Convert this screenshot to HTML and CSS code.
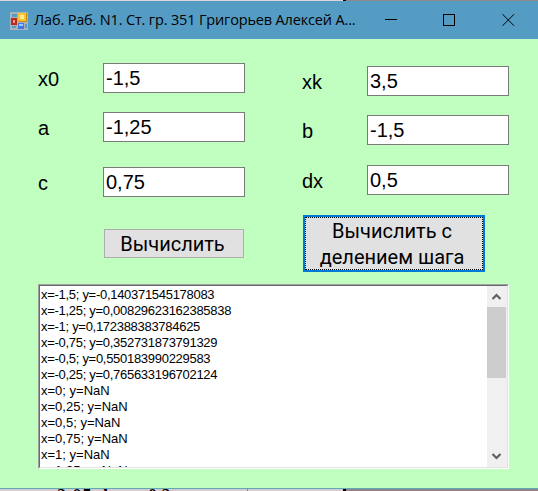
FILE: index.html
```
<!DOCTYPE html>
<html lang="ru">
<head>
<meta charset="utf-8">
<title>Лаб. Раб. N1</title>
<link rel="stylesheet" href="styles.css">
</head>
<body>
<div class="backdrop-top"></div>
<main class="window">
  <header class="titlebar">
    <svg class="app-icon" width="18" height="18" viewBox="0 0 18 18">
      <path fill="#a9b3bd" d="M0 0h18v18H0z"/>
      <path fill="#559cbe" d="M2 2h5v3H2zM2 14h4v2H2zM15 12h2v4h-2z"/>
      <path fill="#b92b20" d="M1 6h6v7H1z"/><path fill="#ee9580" d="M3 8h2v3H3z"/>
      <path fill="#c88b13" d="M8 1h9v9H8z"/><path fill="#f7c52f" d="M8 1h8v8H8z"/><path fill="#ffed91" d="M10 3h4v4h-4z"/>
      <path fill="#4478df" d="M8 11h6v6H8z"/><path fill="#a3c4fa" d="M9 12h4v2H9z"/>
    </svg>
    <h1 class="caption">Лаб. Раб. N1. Ст. гр. 351 Григорьев Алексей А...</h1>
    <svg class="controls" width="130" height="12" viewBox="0 0 130 12" fill="none" stroke="#000">
      <path d="M0 5.5h12M58.5.5h11v11h-11z" shape-rendering="crispEdges"/><path d="M117.5.2l11.6 11.6m0-11.6l-11.6 11.6"/>
    </svg>
  </header>
  <section class="form">
    <div class="column left">
      <label class="field"><span>x0</span><span class="box">-1,5</span></label>
      <label class="field"><span>a</span><span class="box">-1,25</span></label>
      <label class="field last"><span>c</span><span class="box">0,75</span></label>
      <button class="btn plain">Вычислить</button>
    </div>
    <div class="column right">
      <label class="field"><span>xk</span><span class="box">3,5</span></label>
      <label class="field"><span>b</span><span class="box">-1,5</span></label>
      <label class="field last"><span>dx</span><span class="box">0,5</span></label>
      <button class="btn focused"><span>Вычислить с<br>делением шага</span></button>
    </div>
  </section>
  <section class="list">
    <div class="rows">
      <div class="value">x=-1,5; y=-0,140371545178083</div>
      <div class="value">x=-1,25; y=0,00829623162385838</div>
      <div class="value">x=-1; y=0,172388383784625</div>
      <div class="value">x=-0,75; y=0,352731873791329</div>
      <div class="value">x=-0,5; y=0,550183990229583</div>
      <div class="value">x=-0,25; y=0,765633196702124</div>
      <div>x=0; y=NaN</div>
      <div>x=0,25; y=NaN</div>
      <div>x=0,5; y=NaN</div>
      <div>x=0,75; y=NaN</div>
      <div>x=1; y=NaN</div>
      <div>x=1,25; y=NaN</div>
    </div>
    <div class="scrollbar">
      <svg class="arrow" width="20" height="21" viewBox="0 0 20 21"><path d="M5.5 13l4-4 4 4"/></svg>
      <div class="thumb"></div>
      <svg class="arrow down" width="20" height="21" viewBox="0 0 20 21"><path d="M5.5 8l4 4 4-4"/></svg>
    </div>
  </section>
</main>
<footer class="backdrop-bottom"><span class="left-text">2.05 dx</span><span>0.2</span></footer>
</body>
</html>
```

FILE: styles.css
```
* { box-sizing: border-box; }
body {
  margin: 0;
  width: 538px;
  height: 491px;
  overflow: hidden;
  font-family: "Liberation Sans", Arial, sans-serif;
  color: #000;
}
.backdrop-top {
  height: 1px;
  background: linear-gradient(90deg, #d9d7d7 343px, #000 343px 346px, #8c8888 346px);
}
.window {
  height: 488px;
  background: #c0ffc0;
  border-bottom: 1px solid #66a6b5;
}
.titlebar {
  display: flex;
  height: 38px;
  padding: 0 23px 0 10px;
  align-items: center;
  background: #559cc4;
}
.caption {
  margin: 0 0 0 6px;
  font: 400 14.5px/20px "Open Sans", "Noto Sans", sans-serif;
  letter-spacing: -0.16px;
  white-space: nowrap;
}
.app-icon { margin-top: 2px; }
.controls { margin-left: auto; flex: none; width: 130px; }
.form {
  display: flex;
  height: 245px;
  padding-left: 38px;
}
.column { display: flex; flex-direction: column; }
.left { width: 264px; padding-top: 24px; }
.right { width: 207px; padding-top: 27px; }
.field {
  display: flex;
  width: 207px;
  height: 30px;
  margin-bottom: 19px;
  justify-content: space-between;
  font-size: 20px;
  line-height: 32px;
}
.left .last { margin-top: 6px; }
.right .last { margin-top: 1px; }
.box {
  width: 142px;
  height: 30px;
  padding-left: 2px;
  border: 1px solid #7a7a7a;
  background: #fff;
  line-height: 28px;
}
.btn {
  padding: 0;
  font: 20px/26px Roboto, "Liberation Sans", sans-serif;
  color: #000;
  background: #e1e1e1;
}
.plain {
  width: 140px;
  height: 29px;
  margin: 13px 0 0 66px;
  border: 1px solid #adadad;
  padding-right: 3px;
}
.focused {
  width: 182px;
  height: 57px;
  margin: 1px 0 0 1px;
  border: 2px solid #0078d7;
}
.focused span {
  display: block;
  height: 53px;
  padding-right: 4px;
  border: 1px dotted #000;
}
.list {
  display: flex;
  width: 471px;
  height: 185px;
  margin-left: 38px;
  overflow: hidden;
  border: 1px solid;
  border-color: #a0a0a0 #fff #fff #a0a0a0;
  background: #fff;
}
.rows {
  flex: 1;
  overflow: hidden;
  padding: 1px 0 0 1px;
  border: 1px solid;
  border-color: #696969 transparent #e3e3e3 #696969;
  border-right: 0;
  font-size: 13px;
  line-height: 16px;
  white-space: nowrap;
}
.value { letter-spacing: -0.29px; }
.scrollbar {
  display: flex;
  flex-direction: column;
  width: 21px;
  border: solid;
  border-width: 1px 1px 1px 0;
  border-color: #696969 #e3e3e3 #e3e3e3;
  background: #f0f0f0;
}
.arrow { display: block; flex: none; fill: none; stroke: #606060; stroke-width: 2.2; }
.down { margin-top: auto; }
.thumb { width: 19px; height: 71px; background: #cdcdcd; }
.backdrop-bottom {
  display: flex;
  height: 2px;
  padding-left: 57px;
  gap: 29px;
  overflow: hidden;
  background: linear-gradient(90deg, #d0cfcf 247px, #888 247px 248px, #d0cfcf 248px 343px, #000 343px 346px, #8c8888 346px);
  font: bold 18px/18px "Liberation Serif", serif;
}
.backdrop-bottom span { margin-top: -2px; }
.left-text { letter-spacing: 1px; }
```
